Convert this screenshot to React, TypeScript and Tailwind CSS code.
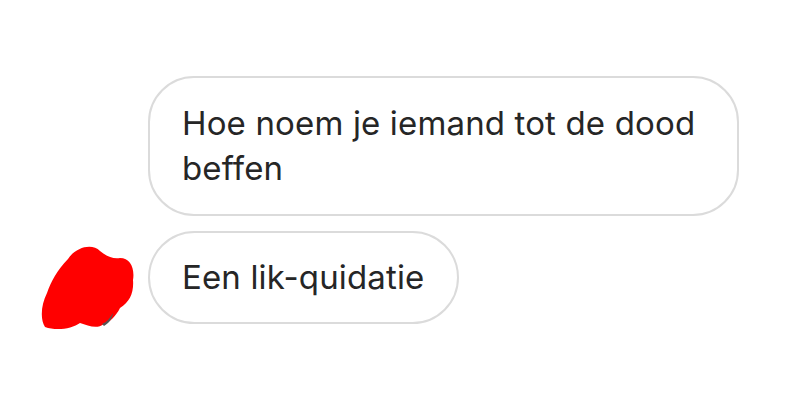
export default function App() {
  return (
    <div className="h-[420px] w-[800px] bg-white font-['Inter','Liberation_Sans',sans-serif] text-[#262626]">
      <div className="flex flex-col gap-[15px] pt-[76px] pl-[40px]">
        <div className="flex">
          <div className="w-[108px] shrink-0" />
          <div className="w-[591px] rounded-[46px] border-2 border-[#dbdbdb] px-[32px] py-[23px] text-[33px] leading-[45px] tracking-[0.15px]">
            Hoe noem je iemand tot de dood beffen
          </div>
        </div>
        <div className="flex items-start">
          <div className="w-[108px] shrink-0 pt-[10px]">
            <svg width="96" height="92" viewBox="0 0 96 92">
              <path
                d="M28 18 C36 6 52 2 60 10 C66 15 72 18 80 17 C90 17 95 27 93 39 C94 51 90 61 80 67 C76 75 70 81 64 83 C56 89 48 84 40 82 C32 88 16 90 5 86 C0 78 1 64 7 52 C11 41 17 29 28 18 Z"
                fill="#ff0000"
              />
              <path d="M62 83 C67 81 70 77 73 72 C72 78 69 82 64 85 Z" fill="#555555" />
            </svg>
          </div>
          <div className="rounded-full border-2 border-[#dbdbdb] px-[32px] py-[22px] text-[33px] leading-[45px] tracking-[0.15px]">
            Een lik-quidatie
          </div>
        </div>
      </div>
    </div>
  )
}
